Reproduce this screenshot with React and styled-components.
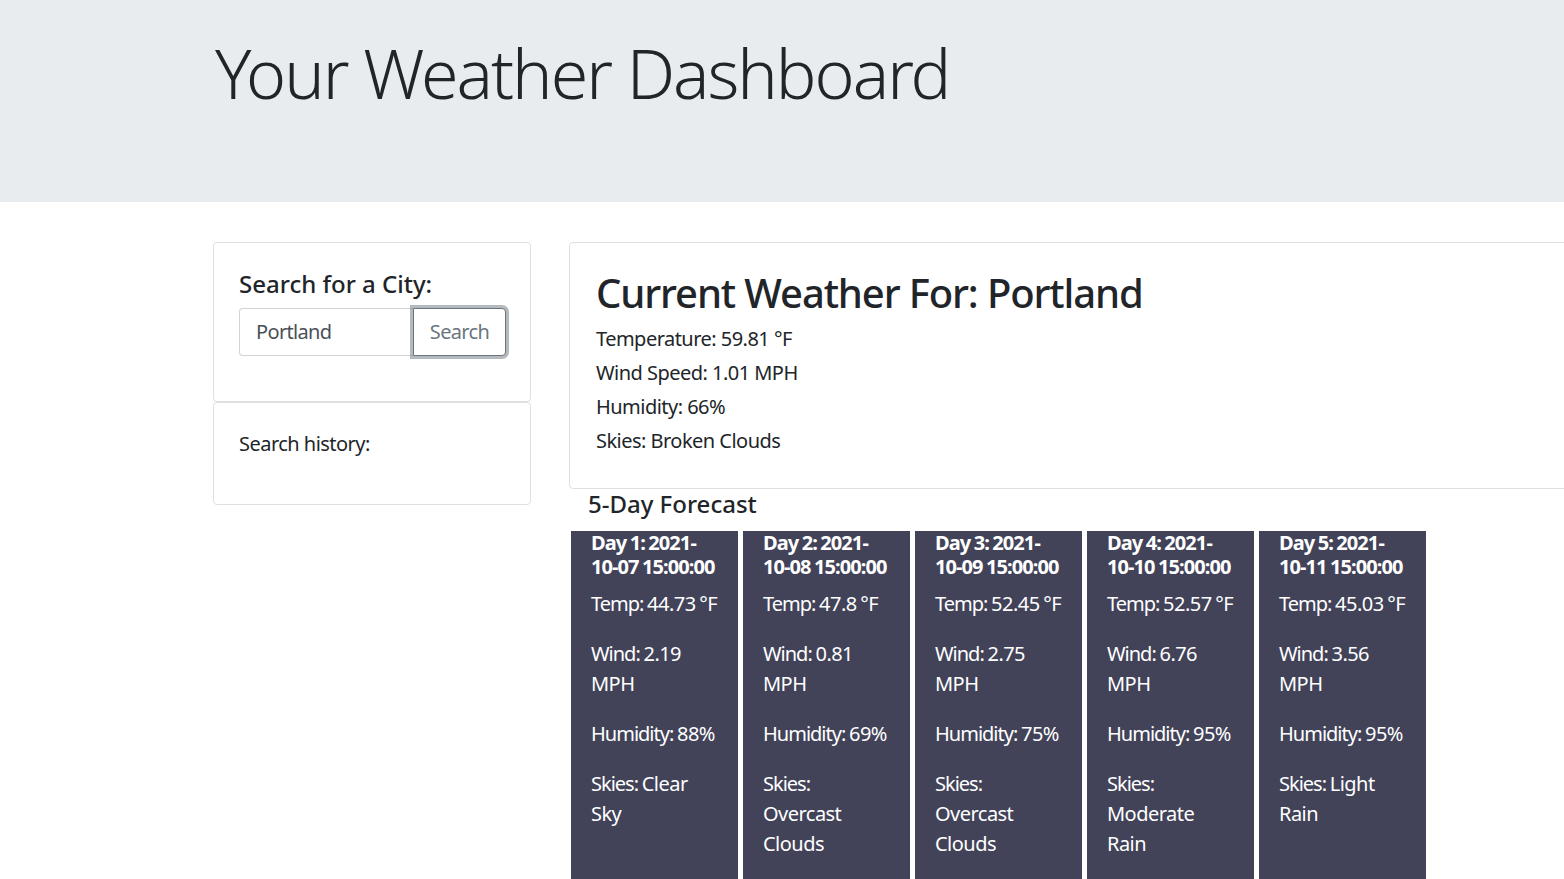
import React from 'react';
import styled, { createGlobalStyle } from 'styled-components';

const GlobalStyle = createGlobalStyle`
	body {
		margin: 0;
		font-family: "Noto Sans", "Open Sans", sans-serif;
		color: #212529;
		background: #fff;
		letter-spacing: -0.033em;
		overflow-x: hidden;
	}
	* {
		box-sizing: border-box;
	}
`;

const current = {
	city: 'Portland',
	temp: '59.81',
	wind: '1.01',
	humidity: '66',
	skies: 'Broken Clouds',
};

const forecast = [
	{ date: '2021-10-07 15:00:00', temp: '44.73', wind: '2.19', humidity: '88', skies: 'Clear Sky' },
	{ date: '2021-10-08 15:00:00', temp: '47.8', wind: '0.81', humidity: '69', skies: 'Overcast Clouds' },
	{ date: '2021-10-09 15:00:00', temp: '52.45', wind: '2.75', humidity: '75', skies: 'Overcast Clouds' },
	{ date: '2021-10-10 15:00:00', temp: '52.57', wind: '6.76', humidity: '95', skies: 'Moderate Rain' },
	{ date: '2021-10-11 15:00:00', temp: '45.03', wind: '3.56', humidity: '95', skies: 'Light Rain' },
];

const App = () => (
	<>
		<GlobalStyle />
		<Jumbotron>
			<Title>Your Weather Dashboard</Title>
		</Jumbotron>
		<Main>
			<Sidebar>
				<Card>
					<SearchBody>
						<SearchLabel>Search for a City:</SearchLabel>
						<InputGroup>
							<CityInput defaultValue="Portland" />
							<SearchButton>Search</SearchButton>
						</InputGroup>
					</SearchBody>
				</Card>
				<Card>
					<HistoryBody>Search history:</HistoryBody>
				</Card>
			</Sidebar>
			<Content>
				<WeatherCard>
					<WeatherTitle>Current Weather For: {current.city}</WeatherTitle>
					<Stat>Temperature: {current.temp} °F</Stat>
					<Stat>Wind Speed: {current.wind} MPH</Stat>
					<Stat>Humidity: {current.humidity}%</Stat>
					<Stat>Skies: {current.skies}</Stat>
				</WeatherCard>
				<ForecastTitle>5-Day Forecast</ForecastTitle>
				<ForecastRow>
					{forecast.map((d, i) => (
						<DayCard key={d.date}>
							<DayTitle>
								Day {i + 1}: {d.date}
							</DayTitle>
							<DayText>
								<Label>Temp:</Label> {d.temp} °F
							</DayText>
							<DayText>
								<Label>Wind:</Label> {d.wind} MPH
							</DayText>
							<DayText>
								<Label>Humidity:</Label> {d.humidity}%
							</DayText>
							<DayText>
								<Label>Skies:</Label> {d.skies}
							</DayText>
						</DayCard>
					))}
				</ForecastRow>
			</Content>
		</Main>
	</>
);

const Jumbotron = styled.header`
	height: 202px;
	background: #e9ecef;
	padding: 32px 0 0 215px;
`;
const Title = styled.h1`
	margin: 0;
	font-size: 68px;
	font-weight: 300;
	line-height: 1.2;
	letter-spacing: -2px;
`;

const Main = styled.main`
	display: flex;
	align-items: flex-start;
	gap: 38px;
	padding: 40px 0 0 213px;
`;

const Sidebar = styled.aside`
	display: flex;
	flex-direction: column;
	width: 318px;
	flex-shrink: 0;
`;
const Card = styled.div`
	border: 1px solid #dfdfdf;
	border-radius: 4px;
	background: #fff;
`;
const SearchBody = styled.div`
	height: 158px;
	padding: 27px 25px 0 25px;
`;
const SearchLabel = styled.h4`
	margin: 0 0 9px;
	font-size: 24px;
	font-weight: 500;
	line-height: 1.2;
	letter-spacing: 0;
`;
const InputGroup = styled.div`
	display: flex;
	width: 267px;
`;
const CityInput = styled.input`
	flex: 1;
	min-width: 0;
	height: 48px;
	padding: 0 16px;
	font: inherit;
	font-size: 20px;
	letter-spacing: -0.033em;
	color: #495057;
	border: 1px solid #ced4da;
	border-right: none;
	border-radius: 4px 0 0 4px;
	outline: none;
`;
const SearchButton = styled.button`
	width: 93px;
	height: 48px;
	font: inherit;
	font-size: 20px;
	letter-spacing: -0.033em;
	color: #6c757d;
	background: #fff;
	border: 1px solid #6c757d;
	border-radius: 0 4px 4px 0;
	box-shadow: 0 0 0 3px rgba(130, 138, 145, 0.6);
	position: relative;
	z-index: 1;
`;
const HistoryBody = styled.div`
	height: 101px;
	padding: 26px 25px 0;
	font-size: 20px;
	line-height: 30px;
`;

const Content = styled.section`
	display: flex;
	flex-direction: column;
	flex-shrink: 0;
`;
const WeatherCard = styled.div`
	width: 1100px;
	height: 247px;
	padding: 26px 26px 0;
	border: 1px solid #dfdfdf;
	border-radius: 4px;
`;
const WeatherTitle = styled.h1`
	margin: 0 0 7px;
	font-size: 40px;
	font-weight: 500;
	line-height: 1.2;
	letter-spacing: -0.028em;
`;
const Stat = styled.p`
	margin: 0 0 4px;
	font-size: 20px;
	line-height: 30px;
`;
const ForecastTitle = styled.h4`
	margin: 0 0 12px 19px;
	padding-top: 1px;
	font-size: 24px;
	font-weight: 500;
	line-height: 1.2;
	letter-spacing: 0;
`;
const ForecastRow = styled.div`
	display: flex;
	gap: 5px;
	margin-left: 2px;
`;
const DayCard = styled.div`
	width: 167px;
	height: 360px;
	padding: 0 19px 0 20px;
	background: #424359;
	color: #fff;
	word-spacing: -1px;
`;
const DayTitle = styled.h5`
	margin: 0 0 10px;
	font-size: 20px;
	font-weight: 700;
	line-height: 24px;
	letter-spacing: -0.045em;
`;
const DayText = styled.p`
	margin: 0 0 20px;
	font-size: 20px;
	line-height: 30px;
`;
const Label = styled.span`
	letter-spacing: -0.05em;
`;

export default App;
